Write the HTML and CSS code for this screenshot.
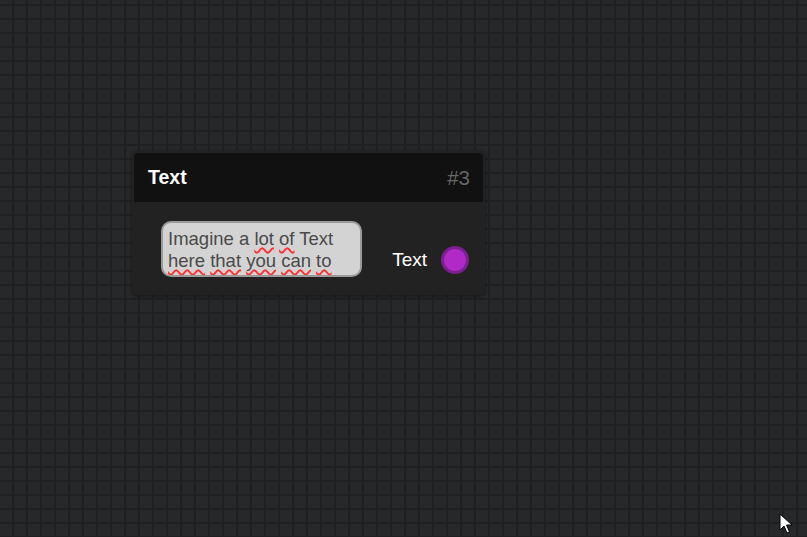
FILE: index.html
```html
<!DOCTYPE html>
<html>
<head>
    <title>Node Editor</title>
    <link rel="stylesheet" href="styles.css">
</head>
<body>

    <div class="canvas">

        <div class="node">
            <div class="node-header">
                <span class="node-title">Text</span>
                <span class="node-id">#3</span>
            </div>

            <div class="node-body">
                <div class="text-input">
                    Imagine a <span class="typo">lot</span> <span class="typo">of</span> Text
                    <span class="typo">here</span> <span class="typo">that</span> <span class="typo">you</span> <span class="typo">can</span> <span class="typo">to</span>
                    <span class="typo">type</span> into <span class="typo">and</span> it <span class="typo">will</span> scroll
                </div>

                <div class="output">
                    <span class="output-label">Text</span>
                    <span class="socket"></span>
                </div>
            </div>
        </div>

        <svg class="cursor" width="14" height="22" viewBox="0 0 14 22">
            <path d="M1 1 L1 17 L5 13 L8 20 L10.5 19 L7.5 12 L13 12 Z" fill="#fff" stroke="#000" stroke-width="1"/>
        </svg>

    </div>

</body>
</html>
```

FILE: styles.css
```css
body {
    margin: 0;
    background-color: #27282a;
    font-family: "Liberation Sans", Arial, sans-serif;
    overflow: hidden;
}

.canvas {
    position: relative;
    width: 807px;
    height: 537px;
    background-color: #27282a;
    background-image:
        linear-gradient(to right, #1f2022 2px, transparent 2px),
        linear-gradient(to bottom, #1f2022 2px, transparent 2px);
    background-size: 14px 14px;
    background-position: 12px 4px;
}

.node {
    position: absolute;
    left: 132px;
    top: 151px;
    width: 349px;
    padding: 2px;
    background-color: #222222;
    border-radius: 5px;
    box-shadow: 0 1px 4px rgba(0, 0, 0, 0.45);
}

.node-header {
    display: flex;
    justify-content: space-between;
    align-items: center;
    height: 49px;
    padding: 0 13px 0 14px;
    background-color: #111111;
    border-radius: 4px 4px 0 0;
}

.node-title {
    color: #ffffff;
    font-weight: bold;
    font-size: 19.5px;
}

.node-id {
    color: #666666;
    font-size: 20.5px;
}

.node-body {
    display: flex;
    justify-content: space-between;
    align-items: flex-end;
    padding: 19px 14px 16px 27px;
}

.text-input {
    box-sizing: border-box;
    width: 201px;
    height: 56px;
    padding: 5px 5px;
    background-color: #d3d3d3;
    border: 2px solid #9a9a9a;
    border-radius: 10px;
    color: #4a4a4a;
    font-size: 18.5px;
    line-height: 22px;
    overflow: hidden;
}

.typo {
    text-decoration: underline wavy #ff3030;
    text-decoration-skip-ink: none;
    text-underline-offset: 2px;
    text-decoration-thickness: 1.6px;
}

.output {
    display: flex;
    align-items: center;
    gap: 14px;
    margin-bottom: 3px;
}

.output-label {
    color: #ffffff;
    font-size: 19px;
}

.socket {
    box-sizing: border-box;
    width: 28px;
    height: 28px;
    border-radius: 50%;
    background-color: #b12ac8;
    border: 3px solid #7c1f92;
}

.cursor {
    position: absolute;
    left: 779px;
    top: 513px;
}
```
